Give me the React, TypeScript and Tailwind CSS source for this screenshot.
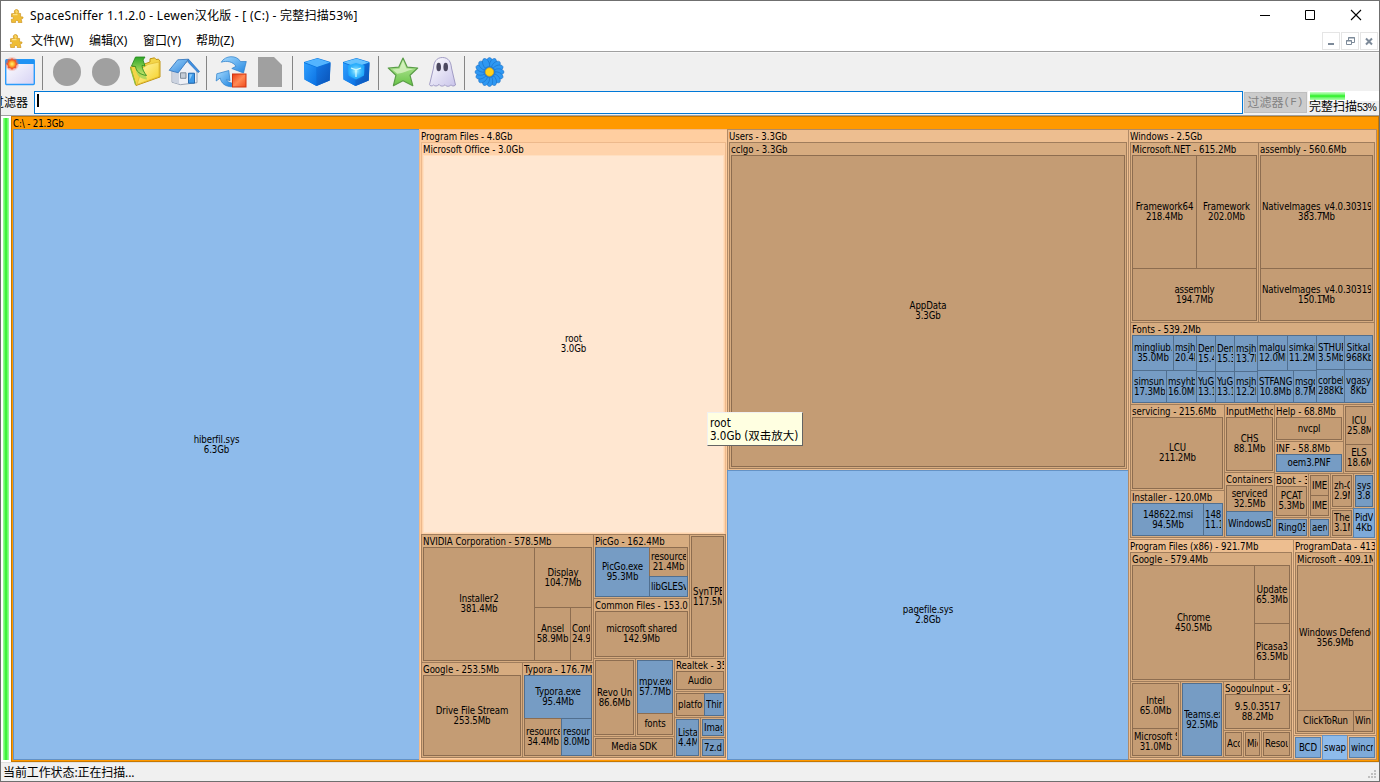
import React from "react";

type Kids = { children?: React.ReactNode };
type Tone = "d1" | "d2";
type LeafTone = "brown" | "blue" | "blue2" | "blue1" | "hot";

const groupTones: Record<Tone | "hot1" | "hot2", string> = {
  d1: "bg-[#edbe90] border-[#b08a67]",
  d2: "bg-[#d7ac80] border-[#a07d5c]",
  hot1: "bg-[#ffcea0] border-[#f0b98a]",
  hot2: "bg-[#ffd3ab] border-[#edb98c]",
};

const leafTones: Record<LeafTone, string> = {
  brown: "bg-[#c49c74] border-[#8d6d50]",
  blue: "bg-[#769cc4] border-[#516f8f]",
  blue2: "bg-[#7eaad9] border-[#5a7fa6]",
  blue1: "bg-[#8ebbeb] border-[#6492c5]",
  hot: "bg-[#ffe7d1] border-[#ffdfc0]",
};

function Row({ c = "flex-1", children }: Kids & { c?: string }) {
  return <div className={`flex min-h-0 min-w-0 shrink-0 [&>*+*]:-ml-px ${c}`}>{children}</div>;
}

function Col({ c = "flex-1", children }: Kids & { c?: string }) {
  return <div className={`flex min-h-0 min-w-0 shrink-0 flex-col [&>*+*]:-mt-px ${c}`}>{children}</div>;
}

function Leaf({ c = "flex-1", t = "brown", n, s }: { c?: string; t?: LeafTone; n: string; s?: string }) {
  return (
    <div
      className={`flex min-h-0 min-w-0 shrink-0 flex-col justify-center overflow-hidden border px-px text-center leading-[10px] ${leafTones[t]} ${c}`}
    >
      <div className="overflow-x-clip whitespace-nowrap">{n}</div>
      {s && <div className="overflow-x-clip whitespace-nowrap">{s}</div>}
    </div>
  );
}

function Group({
  c = "flex-1",
  t = "d2",
  title,
  children,
}: Kids & { c?: string; t?: Tone | "hot1" | "hot2"; title?: string }) {
  return (
    <div
      className={`flex min-h-0 min-w-0 shrink-0 flex-col border px-px pb-px ${title ? "" : "pt-px"} ${groupTones[t]} ${c}`}
    >
      {title && (
        <div className="h-3 shrink-0 overflow-hidden whitespace-nowrap leading-[13px] tracking-[-0.05px]">{title}</div>
      )}
      <div className="flex min-h-0 flex-1">{children}</div>
    </div>
  );
}

function ProgramFiles() {
  return (
    <Group c="w-[309px]" t="hot1" title="Program Files - 4.8Gb">
      <Col>
        <Group c="h-[393px]" t="hot2" title="Microsoft Office - 3.0Gb">
          <Leaf t="hot" n="root" s="3.0Gb" />
        </Group>
        <Row>
          <Col c="w-[173px]">
            <Group c="h-[129px]" title="NVIDIA Corporation - 578.5Mb">
              <Row>
                <Leaf c="w-[112px]" n="Installer2" s="381.4Mb" />
                <Col>
                  <Leaf c="h-[61px]" n="Display" s="104.7Mb" />
                  <Row>
                    <Leaf c="w-[37px]" n="Ansel" s="58.9Mb" />
                    <Leaf n="Container" s="24.9Mb" />
                  </Row>
                </Col>
              </Row>
            </Group>
            <Row>
              <Group c="w-[102px]" title="Google - 253.5Mb">
                <Leaf n="Drive File Stream" s="253.5Mb" />
              </Group>
              <Group title="Typora - 176.7Mb">
                <Col>
                  <Leaf c="h-[44px]" t="blue" n="Typora.exe" s="95.4Mb" />
                  <Row>
                    <Leaf c="w-[38px]" n="resource" s="34.4Mb" />
                    <Leaf t="blue" n="resources" s="8.0Mb" />
                  </Row>
                </Col>
              </Group>
            </Row>
          </Col>
          <Col>
            <Row c="h-[125px]">
              <Col c="w-[97px]">
                <Group c="h-[65px]" title="PicGo - 162.4Mb">
                  <Row>
                    <Leaf c="w-[55px]" t="blue" n="PicGo.exe" s="95.3Mb" />
                    <Col>
                      <Leaf c="h-[30px]" n="resources" s="21.4Mb" />
                      <Leaf t="blue" n="libGLESv2" />
                    </Col>
                  </Row>
                </Group>
                <Group title="Common Files - 153.0Mb">
                  <Leaf n="microsoft shared" s="142.9Mb" />
                </Group>
              </Col>
              <Group>
                <Leaf n="SynTPEnh" s="117.5Mb" />
              </Group>
            </Row>
            <Row>
              <Col c="w-[82px]">
                <Row c="h-[79px]">
                  <Group c="w-[43px]">
                    <Leaf n="Revo Uninstaller" s="86.6Mb" />
                  </Group>
                  <Group>
                    <Col>
                      <Leaf c="h-[54px]" t="blue" n="mpv.exe" s="57.7Mb" />
                      <Leaf n="fonts" />
                    </Col>
                  </Group>
                </Row>
                <Group>
                  <Leaf n="Media SDK" />
                </Group>
              </Col>
              <Col>
                <Group c="h-[34px]" title="Realtek - 35.1Mb">
                  <Leaf n="Audio" />
                </Group>
                <Group c="h-[27px]">
                  <Row>
                    <Leaf c="w-[29px]" n="platform" />
                    <Leaf t="blue" n="Third" />
                  </Row>
                </Group>
                <Row>
                  <Group c="w-[27px]">
                    <Leaf t="blue" n="Listary" s="4.4Mb" />
                  </Group>
                  <Col>
                    <Group c="h-[21px]">
                      <Leaf t="blue" n="Image" />
                    </Group>
                    <Group>
                      <Leaf t="blue" n="7z.dll" />
                    </Group>
                  </Col>
                </Row>
              </Col>
            </Row>
          </Col>
        </Row>
      </Col>
    </Group>
  );
}

function Fonts() {
  return (
    <Group c="h-[83px]" title="Fonts - 539.2Mb">
      <Row>
        <Col c="w-[65px]">
          <Row c="h-[36px]">
            <Leaf c="w-[42px]" t="blue" n="mingliub.ttc" s="35.0Mb" />
            <Leaf t="blue" n="msjh" s="20.4Mb" />
          </Row>
          <Row>
            <Leaf c="w-[35px]" t="blue" n="simsun.ttc" s="17.3Mb" />
            <Leaf t="blue" n="msyhbd" s="16.0Mb" />
          </Row>
        </Col>
        <Col c="w-[20px]">
          <Leaf c="h-[37px]" t="blue" n="Deng" s="15.4Mb" />
          <Leaf t="blue" n="YuGo" s="13.1Mb" />
        </Col>
        <Col c="w-[20px]">
          <Leaf c="h-[37px]" t="blue" n="Deng" s="15.3Mb" />
          <Leaf t="blue" n="YuGo" s="13.1Mb" />
        </Col>
        <Col c="w-[24px]">
          <Leaf c="h-[37px]" t="blue" n="msjh" s="13.7Mb" />
          <Leaf t="blue" n="msjhl" s="12.2Mb" />
        </Col>
        <Col c="w-[60px]">
          <Row c="h-[36px]">
            <Leaf c="w-[31px]" t="blue" n="malgun" s="12.0Mb" />
            <Leaf t="blue" n="simkai" s="11.2Mb" />
          </Row>
          <Row>
            <Leaf c="w-[37px]" t="blue" n="STFANGSO" s="10.8Mb" />
            <Leaf t="blue" n="msgothic" s="8.7Mb" />
          </Row>
        </Col>
        <Col c="w-[29px]">
          <Leaf c="h-[35px]" t="blue" n="STHUPO" s="3.5Mb" />
          <Leaf t="blue" n="corbel" s="288Kb" />
        </Col>
        <Col>
          <Leaf c="h-[35px]" t="blue" n="SitkaI" s="968Kb" />
          <Leaf t="blue" n="vgasys" s="8Kb" />
        </Col>
      </Row>
    </Group>
  );
}

function WindowsFolder() {
  return (
    <Group c="h-[411px]" t="d1" title="Windows - 2.5Gb">
      <Col>
        <Row c="h-[181px]">
          <Group c="w-[129px]" title="Microsoft.NET - 615.2Mb">
            <Col>
              <Row c="h-[114px]">
                <Leaf c="w-[65px]" n="Framework64" s="218.4Mb" />
                <Leaf n="Framework" s="202.0Mb" />
              </Row>
              <Leaf n="assembly" s="194.7Mb" />
            </Col>
          </Group>
          <Group title="assembly - 560.6Mb">
            <Col>
              <Leaf c="h-[114px]" n="NativeImages_v4.0.30319_64" s="383.7Mb" />
              <Leaf n="NativeImages_v4.0.30319_32" s="150.1Mb" />
            </Col>
          </Group>
        </Row>
        <Fonts />
        <Row>
          <Col c="w-[95px]">
            <Group c="h-[87px]" title="servicing - 215.6Mb">
              <Leaf n="LCU" s="211.2Mb" />
            </Group>
            <Group title="Installer - 120.0Mb">
              <Row>
                <Leaf c="w-[72px]" t="blue" n="148622.msi" s="94.5Mb" />
                <Leaf t="blue" n="1486" s="11.1Mb" />
              </Row>
            </Group>
          </Col>
          <Col c="w-[51px]">
            <Group c="h-[69px]" title="InputMethod">
              <Leaf n="CHS" s="88.1Mb" />
            </Group>
            <Group title="Containers">
              <Col>
                <Leaf c="h-[27px]" n="serviced" s="32.5Mb" />
                <Leaf t="blue" n="WindowsDe" />
              </Col>
            </Group>
          </Col>
          <Col>
            <Row c="h-[70px]">
              <Col c="w-[70px]">
                <Group c="h-[38px]" title="Help - 68.8Mb">
                  <Leaf n="nvcpl" />
                </Group>
                <Group title="INF - 58.8Mb">
                  <Leaf t="blue" n="oem3.PNF" />
                </Group>
              </Col>
              <Group>
                <Col>
                  <Leaf c="h-[39px]" n="ICU" s="25.8Mb" />
                  <Leaf n="ELS" s="18.6Mb" />
                </Col>
              </Group>
            </Row>
            <Row>
              <Col c="w-[57px]">
                <Row c="h-[45px]">
                  <Group c="w-[35px]" title="Boot - 32.5Mb">
                    <Leaf n="PCAT" s="5.3Mb" />
                  </Group>
                  <Group>
                    <Col>
                      <Leaf c="h-[21px]" n="IME" />
                      <Leaf n="IME" />
                    </Col>
                  </Group>
                </Row>
                <Row>
                  <Group c="w-[35px]">
                    <Leaf t="blue" n="Ring05" />
                  </Group>
                  <Group>
                    <Leaf t="blue" n="aero" />
                  </Group>
                </Row>
              </Col>
              <Col c="w-[24px]">
                <Group c="h-[36px]">
                  <Leaf n="zh-CN" s="2.9Mb" />
                </Group>
                <Group>
                  <Leaf n="Themes" s="3.1Mb" />
                </Group>
              </Col>
              <Col>
                <Group c="h-[36px]">
                  <Leaf t="blue" n="sys" s="3.8Mb" />
                </Group>
                <Leaf t="blue2" n="PidVid" s="4Kb" />
              </Col>
            </Row>
          </Col>
        </Row>
      </Col>
    </Group>
  );
}

function ProgramFilesX86() {
  return (
    <Group c="w-[166px]" t="d1" title="Program Files (x86) - 921.7Mb">
      <Col>
        <Group c="h-[130px]" title="Google - 579.4Mb">
          <Row>
            <Leaf c="w-[123px]" n="Chrome" s="450.5Mb" />
            <Col>
              <Leaf c="h-[59px]" n="Update" s="65.3Mb" />
              <Leaf n="Picasa3" s="63.5Mb" />
            </Col>
          </Row>
        </Group>
        <Row>
          <Group c="w-[51px]">
            <Col>
              <Leaf c="h-[46px]" n="Intel" s="65.0Mb" />
              <Leaf n="Microsoft SDK" s="31.0Mb" />
            </Col>
          </Group>
          <Group c="w-[44px]">
            <Leaf t="blue" n="Teams.exe" s="92.5Mb" />
          </Group>
          <Col>
            <Group c="h-[50px]" title="SogouInput - 92.4Mb">
              <Leaf n="9.5.0.3517" s="88.2Mb" />
            </Group>
            <Row>
              <Group c="w-[21px]">
                <Leaf n="Acc" />
              </Group>
              <Group c="w-[19px]">
                <Leaf n="Mic" />
              </Group>
              <Group>
                <Leaf n="Resour" />
              </Group>
            </Row>
          </Col>
        </Row>
      </Col>
    </Group>
  );
}

function ProgramData() {
  return (
    <Col>
      <Group c="h-[197px]" t="d1" title="ProgramData - 413.0Mb">
        <Group title="Microsoft - 409.1Mb">
          <Col>
            <Leaf c="h-[146px]" n="Windows Defender" s="356.9Mb" />
            <Row>
              <Leaf c="w-[57px]" n="ClickToRun" />
              <Leaf n="Wind" />
            </Row>
          </Col>
        </Group>
      </Group>
      <Row>
        <Group c="w-[30px]" t="d1">
          <Leaf t="blue2" n="BCD" />
        </Group>
        <Leaf c="w-[26px]" t="blue1" n="swap" />
        <Group t="d1">
          <Leaf t="blue2" n="wincre" />
        </Group>
      </Row>
    </Col>
  );
}

function Treemap() {
  return (
    <div className="flex h-[646px] w-[1368px] flex-col border border-[#c87800] bg-[#ff9900] px-px pb-px font-['DejaVu_Sans_Condensed','DejaVu_Sans',sans-serif] text-[9.6px] tracking-[-0.1px] text-black">
      <div className="h-3 shrink-0 leading-[13px]">C:\ - 21.3Gb</div>
      <Row>
        <Leaf c="w-[407px]" t="blue1" n="hiberfil.sys" s="6.3Gb" />
        <ProgramFiles />
        <Col c="w-[402px]">
          <Group c="h-[342px]" t="d1" title="Users - 3.3Gb">
            <Group title="cclgo - 3.3Gb">
              <Leaf n="AppData" s="3.3Gb" />
            </Group>
          </Group>
          <Leaf t="blue1" n="pagefile.sys" s="2.8Gb" />
        </Col>
        <Col>
          <WindowsFolder />
          <Row>
            <ProgramFilesX86 />
            <ProgramData />
          </Row>
        </Col>
      </Row>
    </div>
  );
}

function Puzzle() {
  return (
    <svg className="h-[14px] w-[14px]" viewBox="0 0 14 14">
      <path
        d="M5 4.400C3.600 3 4.300.6 6.400.6s2.900 2.200 1.600 3.600l2.600.3v3.200c.8.500 2.400-.5 2.500 1 0 1.300-1.600.9-2 1.300l.9 3.500H8.200c.4-1.500-.4-2.200-1.400-2.100-1.100.1-1.600.9-1.100 2.100H1.600l-.3-3.300c1.300.3 2.200-.4 2.100-1.300C3.300 8 2.500 7.600 1.500 8V4.700Z"
        fill="#efbd35"
        stroke="#c88c16"
        strokeWidth=".6"
      />
      <path d="M5.500 2c1-.8 2 0 1.200 2.200M3 5.700h4.500" stroke="#ffeb9a" strokeWidth="1" fill="none" />
    </svg>
  );
}

function Tool({ children, v = "0 0 33 33" }: Kids & { v?: string }) {
  return (
    <div className="flex w-[39px] justify-center">
      <svg className="h-[33px] w-[33px]" viewBox={v}>
        {children}
      </svg>
    </div>
  );
}

function Sep() {
  return (
    <div className="w-2 pl-[2px]">
      <div className="h-[34px] w-px bg-[#858585]" />
    </div>
  );
}

const petals = Array.from({ length: 16 }, (_, i) => i * 22.5);
const rays = Array.from({ length: 8 }, (_, i) => i * 45);

function Toolbar() {
  return (
    <div className="flex h-[38px] shrink-0 items-start bg-[#f0f0f0] pt-[3px]">
      <svg className="absolute h-0 w-0">
        <defs>
          <linearGradient id="win" x1="0" y1="0" x2="1" y2="1">
            <stop offset="0" stopColor="#fff" />
            <stop offset="1" stopColor="#d6d2f4" />
          </linearGradient>
          <linearGradient id="arrow" x1="0" y1="0" x2="1" y2="1">
            <stop offset="0" stopColor="#a8dcff" />
            <stop offset="1" stopColor="#2286e0" />
          </linearGradient>
          <linearGradient id="green" x1="0" y1="0" x2="0" y2="1">
            <stop offset="0" stopColor="#c4ecaa" />
            <stop offset="1" stopColor="#68c446" />
          </linearGradient>
          <linearGradient id="leaf" x1="0" y1="0" x2="0" y2="1">
            <stop offset="0" stopColor="#2ea82a" />
            <stop offset="1" stopColor="#c8e66a" />
          </linearGradient>
          <linearGradient id="folder" x1="0" y1="0" x2="1" y2="1">
            <stop offset="0" stopColor="#fff9b4" />
            <stop offset="1" stopColor="#f5cf20" />
          </linearGradient>
          <linearGradient id="roof" x1="0" y1="0" x2="1" y2="1">
            <stop offset="0" stopColor="#9dd2fb" />
            <stop offset="1" stopColor="#2f86dc" />
          </linearGradient>
          <linearGradient id="stop" x1="0" y1="0" x2="1" y2="1">
            <stop offset="0" stopColor="#ee3a10" />
            <stop offset=".5" stopColor="#ff8a55" />
            <stop offset="1" stopColor="#f04a1c" />
          </linearGradient>
          <linearGradient id="ghost" x1="0" y1="0" x2="1" y2="1">
            <stop offset="0" stopColor="#fff" />
            <stop offset="1" stopColor="#c9c4ea" />
          </linearGradient>
          <linearGradient id="cubeL" x1="0" y1="0" x2="1" y2="1">
            <stop offset="0" stopColor="#2fa0ff" />
            <stop offset="1" stopColor="#0a70e2" />
          </linearGradient>
          <linearGradient id="cubeR" x1="0" y1="0" x2="1" y2="1">
            <stop offset="0" stopColor="#1478e6" />
            <stop offset="1" stopColor="#0a52b6" />
          </linearGradient>
          <radialGradient id="sun">
            <stop offset="0" stopColor="#fff27a" />
            <stop offset=".5" stopColor="#ffb52e" />
            <stop offset="1" stopColor="#f04a22" />
          </radialGradient>
          <radialGradient id="halo">
            <stop offset="0" stopColor="#f04a22" />
            <stop offset=".6" stopColor="#f4674a" stopOpacity=".7" />
            <stop offset="1" stopColor="#f4674a" stopOpacity="0" />
          </radialGradient>
          <radialGradient id="glow">
            <stop offset="0" stopColor="#b8fbff" />
            <stop offset="1" stopColor="#20a8ff" stopOpacity="0" />
          </radialGradient>
        </defs>
      </svg>
      <Tool>
        <rect x="1.7" y="3.7" width="28.600" height="24.800" rx="1" fill="url(#win)" stroke="#2a9bfa" strokeWidth="1.400" />
        <path d="M2 3.500h28.500v4.500H2z" fill="#1f92f4" />
        <circle cx="8" cy="8" r="7.500" fill="url(#halo)" />
        <g stroke="#f0602c" strokeWidth="1.600">
          {rays.map((a) => (
            <path key={a} d="M8 2.500V5" transform={`rotate(${a} 8 8)`} />
          ))}
        </g>
        <circle cx="8" cy="8" r="4.500" fill="url(#sun)" />
      </Tool>
      <Sep />
      <Tool>
        <circle cx="16" cy="16" r="14" fill="#a0a0a0" />
      </Tool>
      <Tool>
        <circle cx="16" cy="16" r="14" fill="#a0a0a0" />
      </Tool>
      <Tool>
        <path
          d="M1.500 11 14 8.500 21 6V2.800l4.500-1 1.500 1.700 2.500-.3L31 5.300V21L7 29.500Z"
          fill="#f3d548"
          stroke="#bf9312"
          strokeWidth="1"
          strokeLinejoin="round"
        />
        <path d="M8 28.500 13.500 12l5.500-3.500 11-2.500v14.500Z" fill="url(#folder)" stroke="#e0b92c" strokeWidth=".7" />
        <path d="M7 12.500c0 6 3 10 11 11-.5-4-3.500-7-5-12.500Z" fill="#a4d458" opacity=".8" />
        <path
          d="M2.500 10 6.500 1h9.500l-2 3 2 6-3-.5c.5 4 2 7 4.500 10C11 18.500 7 15.500 6.500 10.500Z"
          fill="url(#leaf)"
          stroke="#238519"
          strokeWidth=".8"
          strokeLinejoin="round"
        />
        <path d="M1.500 12 6.500 28.500" stroke="#8cc040" strokeWidth="1.200" fill="none" />
      </Tool>
      <Tool>
        <path d="M4 15v11.200l8.500 2.500 16.500-2V14L20.500 5Z" fill="#eef0f6" stroke="#8390a4" strokeWidth=".8" />
        <path d="M4.400 15.500 11 17v11L4.400 26Z" fill="#ccd3e0" />
        <path d="m1.200 14.300 8.500-10.500L20.500 3.200 10.200 16.800Z" fill="url(#roof)" stroke="#2a6fba" strokeWidth=".8" strokeLinejoin="round" />
        <path d="M20.500 3.200 31.500 15.500l-1.500 1L20.300 6.500Z" fill="#3d90e2" stroke="#2a6fba" strokeWidth=".7" />
        <path d="M12.500 16.800h5.500v5.500h-5.500Z" fill="#c5ccd6" stroke="#788391" strokeWidth=".9" />
        <path d="M20.500 17.200h6v10h-6Z" fill="#3f9ae8" stroke="#1a62ac" strokeWidth=".9" />
        <path d="M21.500 18.200h3l-3 6Z" fill="#8fcaf8" />
      </Tool>
      <Sep />
      <Tool>
        <path
          d="M6.300 6.200C10-.8 22-1.300 25.500 5.600L31.300 5.500 28.500 17 16.800 12.500 21 10.300C18 5.800 12 4.300 6.300 6.200Z"
          fill="url(#arrow)"
          stroke="#2a7cc8"
          strokeWidth=".7"
          strokeLinejoin="round"
        />
        <path
          d="m1.800 17.800 12-3.300 1.200 10.300-3.500-1.200c.8 1.800 2.500 3 5.300 3.400v3.800C10.500 30.600 6.200 27.500 5.200 22L1.200 25Z"
          fill="url(#arrow)"
          stroke="#2a7cc8"
          strokeWidth=".7"
          strokeLinejoin="round"
        />
        <rect x="17.500" y="18" width="13.500" height="13" fill="url(#stop)" stroke="#cf3510" />
      </Tool>
      <Tool>
        <path d="M4 1h16l8 8v22H4z" fill="#a0a0a0" />
      </Tool>
      <Sep />
      <Tool v="0.5 0 33 33">
        <path d="M3.500 6 17 2l13 4-.7 18.500L16 30 4 23.500Z" fill="#0875df" />
        <path d="M4 6.300 17 2.500l12.500 4L16.500 11Z" fill="#53b4ff" />
        <path d="M3.500 7 16 11.500V30L4 23.500Z" fill="url(#cubeL)" />
        <path d="M16 11.500 30 7l-.8 17.500L16 30Z" fill="url(#cubeR)" />
      </Tool>
      <Tool v="0.5 0 33 33">
        <path d="M3.500 6 17 2l13 4-.7 18.500L16 30 4 23.500Z" fill="#0875df" />
        <path d="M4 6.300 17 2.500l12.500 4L16.500 11Z" fill="#67c3ff" />
        <path d="M3.500 7 16 11.500V30L4 23.500Z" fill="url(#cubeL)" />
        <path d="M16 11.500 30 7l-.8 17.500L16 30Z" fill="url(#cubeR)" />
        <path d="m8.500 9.500 8-2.500 8.500 2.500-.5 10-8 4-7.500-4Z" fill="#1fa8fb" />
        <circle cx="16.500" cy="15" r="9.500" fill="url(#glow)" />
        <path d="m11.500 12 5 1.800 5-1.800M16.500 14v7" stroke="#d2fbff" strokeWidth="1.200" fill="none" />
      </Tool>
      <Sep />
      <Tool v="0.5 0 33 33">
        <path
          d="m16.500 2 4.300 9.200 10.400.8-7.700 7.300 2.800 10.400-9.800-5-9.600 5 2.500-10.400L1.800 12l10.400-.8Z"
          fill="url(#green)"
          stroke="#5a9d48"
          strokeWidth="1.200"
          strokeLinejoin="round"
        />
        <path d="m16.500 5 3.400 7.500 7 .8c-6 1-10 4-16 4.500L6 13.500l7-.7Z" fill="#e6f8d4" opacity=".65" />
      </Tool>
      <Tool>
        <path
          d="M16.500 1.500c6 0 8.500 4.500 9 10.500L29.500 29c-2 1.700-3.500 1-4.500-.2-2 2.200-4.500 1.800-6 0-2 2-4.500 1.500-6-.3-2 2-4 1.800-5.500.5-1.500 1.500-3.500 1-4-.3L7.500 12c.3-6 3-10.500 9-10.500Z"
          fill="url(#ghost)"
          stroke="#9993be"
          strokeWidth=".9"
        />
        <ellipse cx="12.700" cy="11" rx="2.300" ry="4.300" fill="#4b485f" />
        <ellipse cx="19.700" cy="11" rx="2.300" ry="4.300" fill="#4b485f" />
      </Tool>
      <Sep />
      <Tool>
        {petals.map((a) => (
          <ellipse
            key={a}
            cx="16.500"
            cy="7"
            rx="3.200"
            ry="5.500"
            fill="#2f98f2"
            stroke="#1568c0"
            strokeWidth=".5"
            transform={`rotate(${a} 16.5 16)`}
          />
        ))}
        <circle cx="16.500" cy="16" r="6" fill="#1f7edb" />
        <circle cx="16.500" cy="16" r="4.200" fill="#ffd21c" stroke="#e3a20a" strokeWidth=".7" />
      </Tool>
    </div>
  );
}

function TitleBar() {
  return (
    <div className="flex h-[30px] shrink-0 items-center pl-[9px]">
      <Puzzle />
      <div className="ml-[6px] flex-1 whitespace-pre text-[12px] tracking-[0.27px]">
        SpaceSniffer 1.1.2.0 - Lewen汉化版 - [ (C:) - 完整扫描53%]
      </div>
      <div className="flex w-[137px] pb-px">
        <svg className="h-[29px] w-[46px]" viewBox="0 0 46 29">
          <path d="M18 14.500h10" stroke="#000" />
        </svg>
        <svg className="h-[29px] w-[46px]" viewBox="0 0 46 29">
          <path d="M17.500 9.500h9v9h-9z" stroke="#000" fill="none" />
        </svg>
        <svg className="h-[29px] w-[45px]" viewBox="0 0 45 29">
          <path d="m17 9 10 10M27 9 17 19" stroke="#000" strokeWidth="1.100" />
        </svg>
      </div>
    </div>
  );
}

function MenuBar() {
  return (
    <div className="flex h-[20px] shrink-0 items-center pl-2 text-[12px]">
      <Puzzle />
      <div className="ml-2 w-[58px]">文件(W)</div>
      <div className="w-[54px]">编辑(X)</div>
      <div className="w-[53px]">窗口(Y)</div>
      <div className="flex-1">帮助(Z)</div>
      <div className="flex gap-px pr-px text-[#7d8a99]">
        <svg className="h-[18px] w-[18px] border border-[#e5e5e5]" viewBox="0 0 16 16">
          <path d="M5 11h6" stroke="currentColor" strokeWidth="2" />
        </svg>
        <svg className="h-[18px] w-[18px] border border-[#e5e5e5]" viewBox="0 0 16 16">
          <path d="M6.500 7V4.500h6v5H10M6 5h7M4.500 7.500h5v4h-5zM4 8h6" stroke="currentColor" fill="none" />
        </svg>
        <svg className="h-[18px] w-[18px] border border-[#e5e5e5]" viewBox="0 0 16 16">
          <path d="m5 5.500 6 6M11 5.500l-6 6" stroke="currentColor" strokeWidth="2" />
        </svg>
      </div>
    </div>
  );
}

function FilterRow() {
  return (
    <div className="flex h-[24px] shrink-0 bg-[#f0f0f0] text-[12px]">
      <div className="flex w-[33px] items-center justify-end overflow-hidden whitespace-nowrap pr-[6px]">
        <span className="-ml-3">过滤器</span>
      </div>
      <div className="h-[23px] w-[1209px] border border-[#0078d7] bg-white pl-[2px] pt-[2px]">
        <div className="h-[13px] w-[2px] bg-black" />
      </div>
      <div className="ml-px mt-px flex h-[21px] w-[63px] items-center justify-center whitespace-nowrap border border-[#bfbfbf] bg-[#cccccc] text-[#838383]">
        过滤器<span className="font-['Liberation_Mono',monospace] text-[11px]">(F)</span>
      </div>
      <div className="ml-px flex-1">
        <div className="h-[10px] bg-white pl-[2px] pt-px">
          <div className="h-[8px] w-[35px] bg-linear-to-b from-[#c9ffc9] via-[#00f000] to-[#b0ffb0]" />
        </div>
        <div className="whitespace-nowrap pl-px leading-[12px]">
          完整扫描<span className="font-['Liberation_Sans',sans-serif] text-[10.5px] tracking-[-0.6px]">53%</span>
        </div>
      </div>
    </div>
  );
}

export default function App() {
  return (
    <div className="relative flex h-[782px] w-[1380px] flex-col overflow-hidden border border-[#6f6f6f] bg-white font-['Noto_Sans','Noto_Sans_CJK_SC',sans-serif] text-black">
      <TitleBar />
      <MenuBar />
      <div className="h-[2px] shrink-0 border-t border-[#a0a0a0] bg-[#f8f8f8]" />
      <Toolbar />
      <FilterRow />
      <div className="h-px shrink-0 bg-[#a0a0a0]" />
      <div className="flex h-[646px] shrink-0">
        <div className="w-[10px] bg-white px-[2px] pb-[2px] pt-[2px]">
          <div className="h-full w-[6px] bg-linear-to-r from-[#a0ffa0] via-[#00f000] to-[#a0ffa0]" />
        </div>
        <Treemap />
      </div>
      <div className="flex flex-1 items-center justify-between border-t border-[#e0e0e0] bg-[#f0f0f0] pl-[2px] text-[12px]">
        <span className="pt-px tracking-[-0.1px]">当前工作状态:正在扫描...</span>
        <svg className="mt-1 h-[12px] w-[12px]" viewBox="0 0 12 12">
          <path d="M7 1h2v2H7zM4 4h2v2H4zM7 4h2v2H7zM1 7h2v2H1zM4 7h2v2H4zM7 7h2v2H7z" fill="#bfbfbf" />
        </svg>
      </div>
      <div className="absolute left-[706px] top-[411px] h-[34px] w-[96px] whitespace-nowrap border border-b-[#646464] border-l-[#f0f0f0] border-r-[#646464] border-t-[#f0f0f0] bg-[#ffffe1] pl-[2px] pt-[4px] font-['DejaVu_Sans_Condensed','Noto_Sans_CJK_SC',sans-serif] text-[11.5px] leading-[13px]">
        root
        <br />
        3.0Gb (双击放大)
      </div>
    </div>
  );
}
